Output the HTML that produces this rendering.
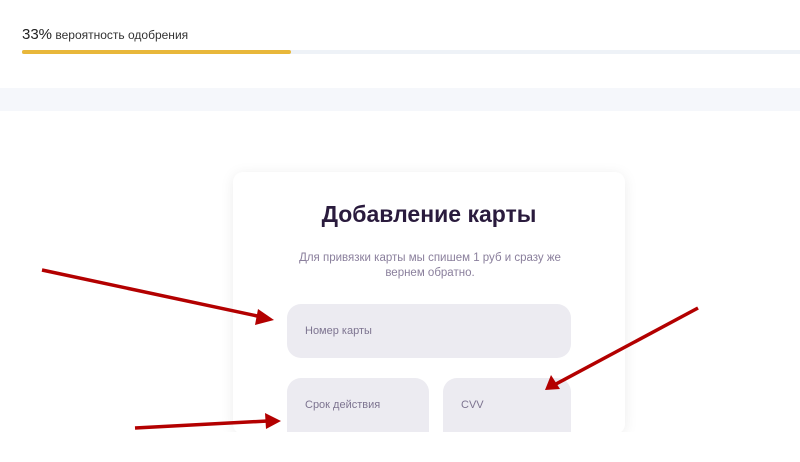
<!DOCTYPE html><html><head><style>
body{margin:0;width:800px;height:462px;background:#fff;position:relative;overflow:hidden;font-family:"Liberation Sans",sans-serif}
.a{position:absolute}
.inp{position:absolute;background:#ecebf1;border-radius:14px;color:#7d7490;font-size:11px;box-sizing:border-box;padding-left:18px;display:flex;align-items:center}
</style></head><body>
<div class="a" style="left:22px;top:26px;font-size:12px;color:#333;"><span style="font-size:15px;color:#222">33%</span> вероятность одобрения</div>
<div class="a" style="left:22px;top:50px;width:778px;height:4px;background:#eef2f7"></div>
<div class="a" style="left:22px;top:50px;width:269px;height:4px;background:#e8b73a;border-radius:2px"></div>
<div class="a" style="left:0;top:88px;width:800px;height:23px;background:#f5f7fb"></div>
<div class="a" style="left:233px;top:172px;width:392px;height:262px;background:#fff;border-radius:10px;box-shadow:0 2px 14px rgba(0,0,0,.08)"></div>
<div class="a" style="left:0;top:432px;width:800px;height:30px;background:#fff"></div>
<div class="a" style="left:233px;width:392px;top:201px;text-align:center;font-size:23px;font-weight:bold;color:#2a1b3d">Добавление карты</div>
<div class="a" style="left:280px;width:300px;top:251px;text-align:center;font-size:11.5px;line-height:15px;color:#8a7f9c">Для привязки карты мы спишем 1 руб и сразу же вернем обратно.</div>
<div class="inp" style="left:287px;top:304px;width:284px;height:54px">Номер карты</div>
<div class="inp" style="left:287px;top:378px;width:142px;height:54px;border-radius:14px 14px 0 0">Срок действия</div>
<div class="inp" style="left:443px;top:378px;width:128px;height:54px;border-radius:14px 14px 0 0">CVV</div>
<svg class="a" style="left:0;top:0" width="800" height="462">
<g stroke="#b30000" stroke-width="3.5" fill="#b30000">
<line x1="42" y1="270" x2="262" y2="317"/><polygon points="274,320 258,309 255,325" stroke="none"/>
<line x1="135" y1="428" x2="268" y2="421"/><polygon points="281,421 265,413 266,429" stroke="none"/>
<line x1="698" y1="308" x2="556" y2="384"/><polygon points="545,390 551,375 560,389" stroke="none"/>
</g></svg>
</body></html>
